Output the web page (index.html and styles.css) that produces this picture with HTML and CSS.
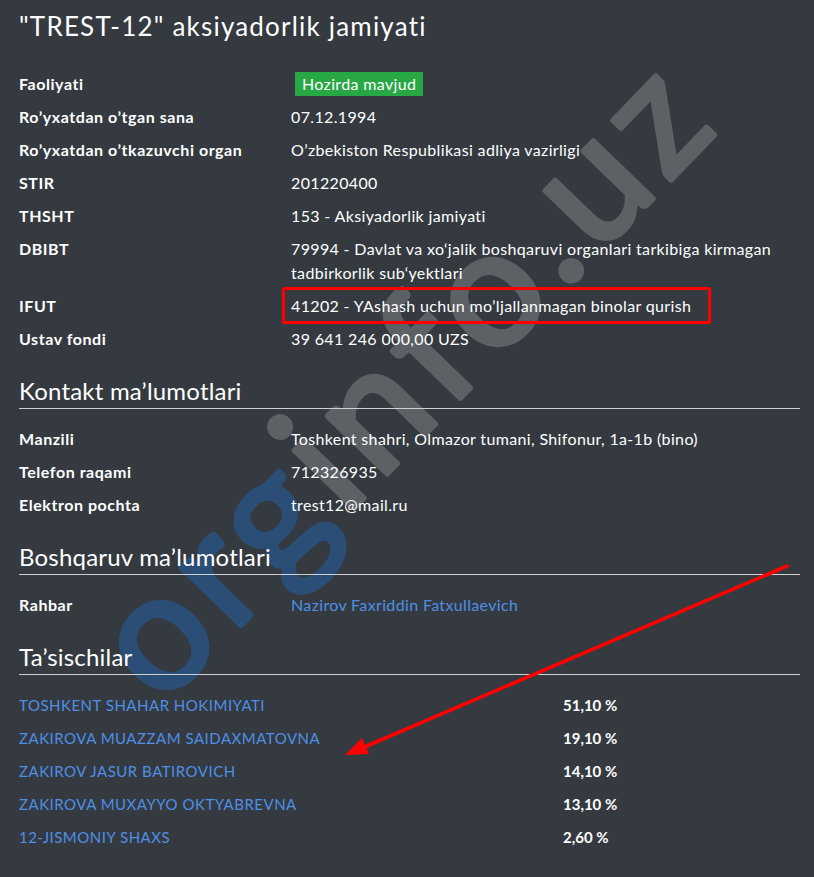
FILE: index.html
```html
<!DOCTYPE html>
<html lang="uz">
<head>
<meta charset="utf-8">
<title>"TREST-12" aksiyadorlik jamiyati</title>
<link rel="stylesheet" href="styles.css">
</head>
<body>
<div class="page">
  <svg class="watermark" width="814" height="877" viewBox="0 0 814 877" aria-hidden="true">
    <text class="wm-text" x="415" y="428" transform="rotate(-46 415 388)" text-anchor="middle"><tspan class="wm-blue">org</tspan><tspan class="wm-grey">info.uz</tspan></text>
  </svg>

  <main class="content">
    <h1 class="title">"TREST-12" aksiyadorlik jamiyati</h1>

    <dl class="info">
      <dt class="label">Faoliyati</dt>
      <dd class="value"><span class="badge">Hozirda mavjud</span></dd>
      <dt class="label">Ro’yxatdan o’tgan sana</dt>
      <dd class="value">07.12.1994</dd>
      <dt class="label">Ro’yxatdan o’tkazuvchi organ</dt>
      <dd class="value">O’zbekiston Respublikasi adliya vazirligi</dd>
      <dt class="label">STIR</dt>
      <dd class="value">201220400</dd>
      <dt class="label">THSHT</dt>
      <dd class="value">153 - Aksiyadorlik jamiyati</dd>
      <dt class="label">DBIBT</dt>
      <dd class="value">79994 - Davlat va xo‘jalik boshqaruvi organlari tarkibiga kirmagan tadbirkorlik sub‘yektlari</dd>
      <dt class="label">IFUT</dt>
      <dd class="value">41202 - YAshash uchun mo’ljallanmagan binolar qurish<span class="mark-box"></span></dd>
      <dt class="label">Ustav fondi</dt>
      <dd class="value">39 641 246 000,00 UZS</dd>
    </dl>

    <h2 class="section-title">Kontakt ma’lumotlari</h2>
    <dl class="info">
      <dt class="label">Manzili</dt>
      <dd class="value">Toshkent shahri, Olmazor tumani, Shifonur, 1a-1b (bino)</dd>
      <dt class="label">Telefon raqami</dt>
      <dd class="value">712326935</dd>
      <dt class="label">Elektron pochta</dt>
      <dd class="value">trest12@mail.ru</dd>
    </dl>

    <h2 class="section-title">Boshqaruv ma’lumotlari</h2>
    <dl class="info">
      <dt class="label">Rahbar</dt>
      <dd class="value"><a class="link" href="#">Nazirov Faxriddin Fatxullaevich</a></dd>
    </dl>

    <h2 class="section-title">Ta’sischilar</h2>
    <dl class="info founders">
      <dt class="founder"><a class="link" href="#">TOSHKENT SHAHAR HOKIMIYATI</a></dt>
      <dd class="share">51,10 %</dd>
      <dt class="founder"><a class="link" href="#">ZAKIROVA MUAZZAM SAIDAXMATOVNA</a></dt>
      <dd class="share">19,10 %</dd>
      <dt class="founder"><a class="link" href="#">ZAKIROV JASUR BATIROVICH</a></dt>
      <dd class="share">14,10 %</dd>
      <dt class="founder"><a class="link" href="#">ZAKIROVA MUXAYYO OKTYABREVNA</a></dt>
      <dd class="share">13,10 %</dd>
      <dt class="founder"><a class="link" href="#">12-JISMONIY SHAXS</a></dt>
      <dd class="share">2,60 %</dd>
    </dl>
  </main>

  <svg class="arrow" width="814" height="877" viewBox="0 0 814 877" aria-hidden="true">
    <line class="arrow-line" x1="787" y1="566" x2="362" y2="748"></line>
    <polygon class="arrow-head" points="345,755 369,754 362,738"></polygon>
  </svg>
</div>
</body>
</html>
```

FILE: styles.css
```css
* {
  box-sizing: border-box;
}

html,
body {
  margin: 0;
  background: #343a40;
}

body {
  font-family: "Lato", "Noto Sans", sans-serif;
  color: #ffffff;
  font-size: 16px;
}

.page {
  position: relative;
  min-height: 877px;
  padding: 10px 14px 20px 19px;
  overflow: hidden;
}

.watermark {
  position: absolute;
  left: 0;
  top: 0;
  z-index: 0;
}

.wm-text {
  font-family: "Lato", sans-serif;
  font-weight: 400;
  font-size: 165px;
  letter-spacing: 9px;
  stroke-width: 5px;
  stroke-linejoin: round;
}

.wm-blue {
  fill: #2b4e76;
  stroke: #2b4e76;
}

.wm-grey {
  fill: #5c6166;
  stroke: #5c6166;
}

.content {
  position: relative;
  z-index: 1;
}

.title {
  margin: 0;
  font-size: 26px;
  line-height: 32px;
  font-weight: 400;
  letter-spacing: 1.2px;
}

.info {
  display: grid;
  grid-template-columns: 272px 1fr;
  row-gap: 9px;
  margin: 30px 0 0;
  line-height: 24px;
}

.label {
  font-weight: 700;
  font-size: 16px;
  letter-spacing: 0.55px;
}

.value {
  margin: 0;
  position: relative;
  letter-spacing: 0.35px;
}

.badge {
  display: inline-block;
  background: #28a745;
  padding: 0 7px;
  margin-left: 4px;
  line-height: 24px;
}

.mark-box {
  position: absolute;
  left: -9px;
  top: -7px;
  width: 429px;
  height: 37px;
  border: 3.5px solid #ff0000;
  border-radius: 2px;
}

.section-title {
  margin: 26px 0 0;
  font-size: 24px;
  line-height: 28px;
  font-weight: 400;
  letter-spacing: 0.2px;
  padding-bottom: 3px;
  border-bottom: 1px solid #cfd0d2;
}

.section-title + .info {
  margin-top: 18px;
}

.founders {
  grid-template-columns: 544px 1fr;
}

.founder {
  margin: 0;
  font-size: 15px;
  letter-spacing: 0.5px;
}

.share {
  margin: 0;
  font-size: 15px;
  font-weight: 700;
}

.link {
  color: #4f8fe6;
  text-decoration: none;
}

.arrow {
  position: absolute;
  left: 0;
  top: 0;
  z-index: 2;
  pointer-events: none;
}

.arrow-line {
  stroke: #ff0000;
  stroke-width: 3.6px;
  stroke-linecap: round;
}

.arrow-head {
  fill: #ff0000;
}
```
